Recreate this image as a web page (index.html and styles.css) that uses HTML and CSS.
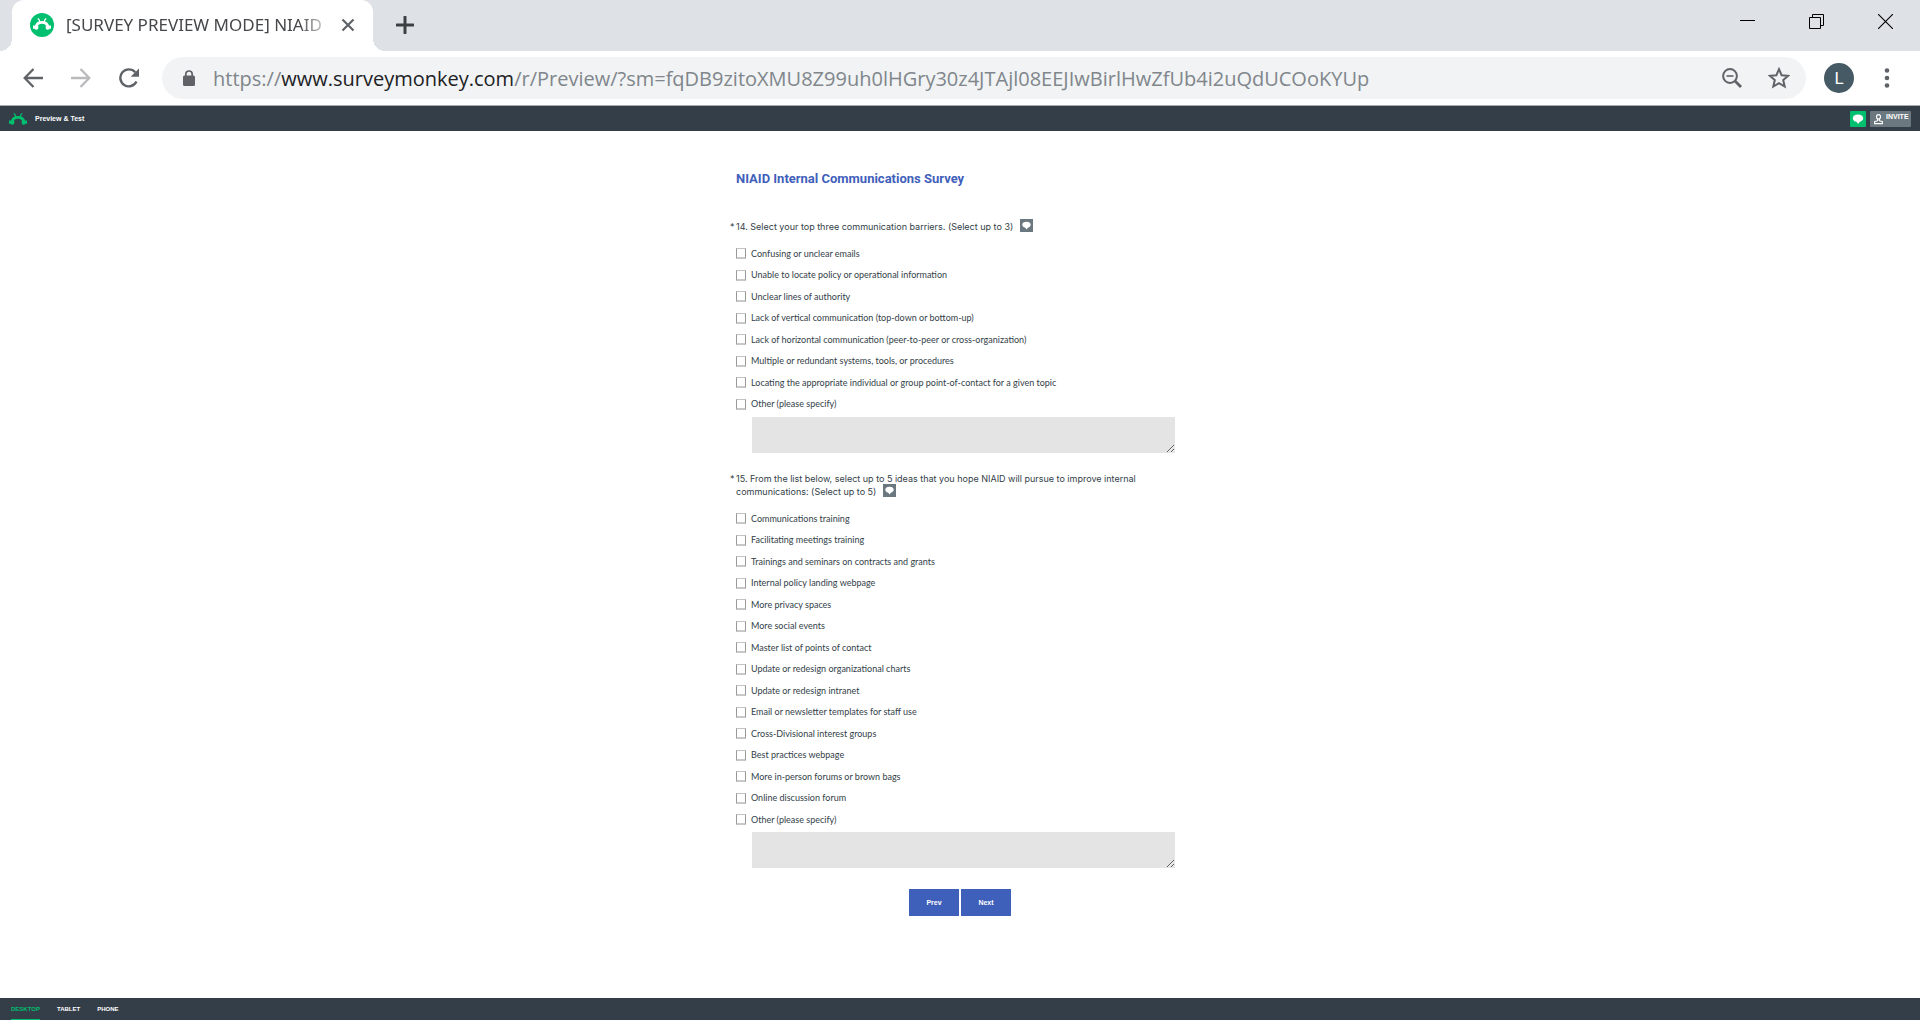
FILE: index.html
```
<!DOCTYPE html>
<html lang="en">
<head>
<meta charset="utf-8">
<title>[SURVEY PREVIEW MODE] NIAID Internal Communications Survey</title>
<link rel="stylesheet" href="styles.css">
</head>
<body>
<svg class="defs" aria-hidden="true">
  <symbol id="monkey" viewBox="0 0 18 12">
    <path d="M3.200 8.600C3.800 5.500 6 4.400 9 4.400s5.200 1.100 5.800 4.200" fill="none" stroke="currentColor" stroke-width="2.900"/>
    <path d="M6.700 3.600C6.500 2 6 1.200 5.200.800M11.300 3.600c.2-1.600.7-2.400 1.500-2.800" fill="none" stroke="currentColor" stroke-width="1.300" stroke-linecap="round"/>
    <path d="M1.200 7.400a1.700 1.700 0 1 0 .4 3.300 2 2 0 0 0 3.700-.5V8zM16.800 7.400a1.700 1.700 0 1 1-.4 3.300 2 2 0 0 1-3.700-.5V8z" fill="currentColor"/>
  </symbol>
  <symbol id="bubble" viewBox="0 0 13 13">
    <path d="M6.500 2.800C3.900 2.800 2.300 4 2.300 5.800c0 1.600 1.300 2.600 3 2.900L6.600 10.600 7.900 8.700c1.600-.4 2.800-1.400 2.800-2.900 0-1.800-1.600-3-4.200-3z" fill="#fff"/>
  </symbol>
</svg>

<header class="browser">
  <div class="tab-strip">
    <div class="tab">
      <svg class="favicon" viewBox="0 0 24 24" aria-hidden="true"><circle cx="12" cy="12" r="12" fill="#00bf6f"/><use href="#monkey" x="3" y="5" width="18" height="12" color="#fff"/></svg>
      <span class="tab-title">[SURVEY PREVIEW MODE] NIAID</span>
      <button class="icon-button tab-close" aria-label="Close tab"><svg width="14" height="14" viewBox="0 0 14 14"><path d="M1.500 1.500l11 11M12.500 1.500l-11 11" stroke="#5f6368" stroke-width="2.200"/></svg></button>
    </div>
    <button class="icon-button new-tab" aria-label="New tab"><svg width="18" height="18" viewBox="0 0 18 18"><path d="M9 1v16M1 9h16" stroke="#3c4043" stroke-width="3" stroke-linecap="round"/></svg></button>
    <div class="window-controls">
      <button class="icon-button window-button" aria-label="Minimize"><svg width="15" height="15" viewBox="0 0 15 15"><path d="M0 6.500h15" stroke="#000"/></svg></button>
      <button class="icon-button window-button" aria-label="Restore"><svg width="15" height="15" viewBox="0 0 15 15"><path d="M.5 3.500h11v11H.5zM3.500 3.500v-3h11v11h-3" fill="none" stroke="#000"/></svg></button>
      <button class="icon-button window-button" aria-label="Close"><svg width="15" height="15" viewBox="0 0 15 15"><path d="M0 0l15 15M15 0L0 15" stroke="#000" stroke-width="1.100"/></svg></button>
    </div>
  </div>
  <div class="toolbar">
    <button class="icon-button nav-button" aria-label="Back"><svg width="20" height="20" viewBox="0 0 20 20"><path d="M20 10H2M10.500 1L1.700 10l8.800 9" fill="none" stroke="#5f6368" stroke-width="2.300"/></svg></button>
    <button class="icon-button nav-button" aria-label="Forward"><svg width="20" height="20" viewBox="0 0 20 20"><path d="M0 10h18M9.500 1l8.800 9-8.800 9" fill="none" stroke="#bababd" stroke-width="2.300"/></svg></button>
    <button class="icon-button nav-button" aria-label="Reload"><svg width="22" height="20" viewBox="0 0 22 20"><path d="M18.500 13.500A8.500 8.500 0 1 1 17.200 4.200" fill="none" stroke="#5f6368" stroke-width="2.400"/><path d="M21 .5v8.300h-8.300z" fill="#5f6368"/></svg></button>
    <div class="omnibox">
      <svg class="lock" width="12" height="16" viewBox="0 0 12 16" aria-hidden="true"><path d="M2.800 7V4.200a3.200 3.200 0 0 1 6.400 0V7" fill="none" stroke="#5f6368" stroke-width="1.700"/><rect y="5.500" width="12" height="10.500" rx="1.500" fill="#5f6368"/></svg>
      <div class="url" role="textbox" contenteditable="true" spellcheck="false" aria-label="Address">https://<span class="url-host">www.surveymonkey.com</span>/r/Preview/?sm=fqDB9zitoXMU8Z99uh0lHGry30z4JTAjl08EEJIwBirlHwZfUb4i2uQdUCOoKYUp</div>
      <button class="icon-button" aria-label="Zoom out"><svg width="20" height="20" viewBox="0 0 20 20"><circle cx="8" cy="8" r="6.900" fill="none" stroke="#5f6368" stroke-width="2"/><path d="M4.500 8h7" stroke="#5f6368" stroke-width="1.600"/><path d="M12.800 12.800l6.200 6.200" stroke="#5f6368" stroke-width="2.800"/></svg></button>
      <button class="icon-button" aria-label="Bookmark this page"><svg width="22" height="22" viewBox="0 0 22 22"><path d="M11 2.200l2.600 6 6.500.6-4.900 4.300 1.500 6.400L11 16.100l-5.700 3.400 1.500-6.400L1.900 8.800l6.500-.6z" fill="none" stroke="#5f6368" stroke-width="2"/></svg></button>
    </div>
    <button class="avatar" aria-label="Profile L">L</button>
    <button class="icon-button menu" aria-label="Menu"><svg width="6" height="20" viewBox="0 0 6 20"><g fill="#5f6368"><circle cx="3" cy="2.500" r="2.300"/><circle cx="3" cy="10" r="2.300"/><circle cx="3" cy="17.500" r="2.300"/></g></svg></button>
  </div>
</header>

<div class="preview-bar">
  <svg class="brand" width="18" height="12" aria-hidden="true"><use href="#monkey"/></svg>
  <span class="preview-title">Preview &amp; Test</span>
  <button class="comment-button" aria-label="Comments"><svg width="16" height="16"><use href="#bubble"/></svg></button>
  <button class="invite-button"><svg width="11" height="12" viewBox="0 0 11 12" aria-hidden="true"><path d="M5.500 1.600c-1.500 0-2 1-2 2.100s.7 2.300 2 2.300 2-1.200 2-2.300-.5-2.100-2-2.100zM4.600 6v1.700L1.600 8.600v2h7.800v-2l-3-.9V6" fill="none" stroke="#fff" stroke-width="1.100"/></svg><span>INVITE</span></button>
</div>

<main class="page">
  <form class="survey">
    <h1>NIAID Internal Communications Survey</h1>

    <fieldset class="question">
      <legend><span class="required">*</span>14. Select your top three communication barriers. (Select up to 3) <button type="button" class="note" aria-label="Comment on question 14"><svg width="13" height="13"><use href="#bubble"/></svg></button></legend>
      <div class="options">
        <label><input type="checkbox" name="q14">Confusing or unclear emails</label>
        <label><input type="checkbox" name="q14">Unable to locate policy or operational information</label>
        <label><input type="checkbox" name="q14">Unclear lines of authority</label>
        <label><input type="checkbox" name="q14">Lack of vertical communication (top-down or bottom-up)</label>
        <label><input type="checkbox" name="q14">Lack of horizontal communication (peer-to-peer or cross-organization)</label>
        <label><input type="checkbox" name="q14">Multiple or redundant systems, tools, or procedures</label>
        <label><input type="checkbox" name="q14">Locating the appropriate individual or group point-of-contact for a given topic</label>
        <label><input type="checkbox" name="q14">Other (please specify)</label>
      </div>
      <textarea aria-label="Other communication barrier"></textarea>
    </fieldset>

    <fieldset class="question">
      <legend><span class="required">*</span>15. From the list below, select up to 5 ideas that you hope NIAID will pursue to improve internal communications: (Select up to 5) <button type="button" class="note" aria-label="Comment on question 15"><svg width="13" height="13"><use href="#bubble"/></svg></button></legend>
      <div class="options">
        <label><input type="checkbox" name="q15">Communications training</label>
        <label><input type="checkbox" name="q15">Facilitating meetings training</label>
        <label><input type="checkbox" name="q15">Trainings and seminars on contracts and grants</label>
        <label><input type="checkbox" name="q15">Internal policy landing webpage</label>
        <label><input type="checkbox" name="q15">More privacy spaces</label>
        <label><input type="checkbox" name="q15">More social events</label>
        <label><input type="checkbox" name="q15">Master list of points of contact</label>
        <label><input type="checkbox" name="q15">Update or redesign organizational charts</label>
        <label><input type="checkbox" name="q15">Update or redesign intranet</label>
        <label><input type="checkbox" name="q15">Email or newsletter templates for staff use</label>
        <label><input type="checkbox" name="q15">Cross-Divisional interest groups</label>
        <label><input type="checkbox" name="q15">Best practices webpage</label>
        <label><input type="checkbox" name="q15">More in-person forums or brown bags</label>
        <label><input type="checkbox" name="q15">Online discussion forum</label>
        <label><input type="checkbox" name="q15">Other (please specify)</label>
      </div>
      <textarea aria-label="Other idea"></textarea>
    </fieldset>

    <div class="pager">
      <button type="button">Prev</button>
      <button type="button">Next</button>
    </div>
  </form>
</main>

<nav class="device-bar" aria-label="Preview device">
  <a class="active" href="#desktop">DESKTOP</a>
  <a href="#tablet">TABLET</a>
  <a href="#phone">PHONE</a>
</nav>
</body>
</html>
```
FILE: styles.css
```
* {
  box-sizing: border-box;
}

body {
  margin: 0;
  min-height: 100vh;
  display: flex;
  flex-direction: column;
  background: #fff;
  font-family: Roboto, "Liberation Sans", sans-serif;
  color: #333e48;
}

button {
  font: inherit;
  border: 0;
  padding: 0;
  cursor: pointer;
}

svg {
  display: block;
  flex: none;
}

.defs {
  position: absolute;
  width: 0;
  height: 0;
}

.icon-button {
  display: flex;
  align-items: center;
  justify-content: center;
  background: none;
}

/* Browser frame */

.tab-strip {
  display: flex;
  height: 51px;
  padding-left: 12px;
  background: #dee1e6;
}

.tab {
  position: relative;
  display: flex;
  align-items: center;
  width: 361px;
  padding: 0 17px 2px 18px;
  background: #fff;
  border-radius: 12px 12px 0 0;
}

.tab::before,
.tab::after {
  content: "";
  position: absolute;
  bottom: 0;
  width: 12px;
  height: 12px;
}

.tab::before {
  left: -12px;
  background: radial-gradient(circle at 0 0, #dee1e6 12px, #fff 12px);
}

.tab::after {
  right: -12px;
  background: radial-gradient(circle at 100% 0, #dee1e6 12px, #fff 12px);
}

.favicon {
  width: 24px;
  height: 24px;
}

.tab-title {
  flex: 1;
  margin-left: 12px;
  overflow: hidden;
  white-space: nowrap;
  font: 17px/24px "Noto Sans", sans-serif;
  color: #45474a;
  -webkit-mask-image: linear-gradient(to left, transparent 8px, #000 40px);
  mask-image: linear-gradient(to left, transparent 8px, #000 40px);
}

.tab-close {
  width: 16px;
}

.new-tab {
  width: 40px;
  height: 49px;
  margin-left: 12px;
}

.window-controls {
  display: flex;
  margin-left: auto;
  height: 43px;
}

.window-button {
  width: 69px;
}

.toolbar {
  display: flex;
  align-items: center;
  height: 55px;
  padding: 0 21px 0 9px;
  border-bottom: 1px solid #a9acaf;
}

.nav-button {
  width: 48px;
  height: 42px;
}

.omnibox {
  flex: 1;
  min-width: 0;
  display: flex;
  align-items: center;
  gap: 26px;
  height: 42px;
  margin-left: 9px;
  padding: 0 16px 0 21px;
  border-radius: 21px;
  background: #f1f3f4;
}

.url {
  flex: 1;
  min-width: 0;
  margin-left: -8px;
  padding-top: 2px;
  overflow: hidden;
  white-space: nowrap;
  font: 20px/28px "Open Sans", sans-serif;
  color: #80868b;
  outline: 0;
}

.url-host {
  color: #202124;
}

.avatar {
  width: 30px;
  height: 30px;
  margin-left: 18px;
  border-radius: 50%;
  background: #455a64;
  color: #fff;
  font-size: 17px;
  line-height: 30px;
}

.menu {
  width: 24px;
  height: 42px;
  margin-left: 21px;
}

/* Survey preview header */

.preview-bar {
  display: flex;
  align-items: center;
  height: 25px;
  padding: 0 9px;
  background: #333e48;
  color: #fff;
  font-family: "Liberation Sans", sans-serif;
  font-weight: bold;
}

.brand {
  color: #00bf6f;
}

.preview-title {
  margin-left: 8px;
  font-size: 7px;
  line-height: 10px;
}

.comment-button {
  margin-left: auto;
  height: 16px;
  border-radius: 1px;
  background: #00bf6f;
}

.invite-button {
  display: flex;
  align-items: center;
  gap: 2px;
  width: 41px;
  height: 16px;
  margin-left: 4px;
  padding: 0 3px;
  border-radius: 1px;
  background: #6b787f;
  color: #fff;
  font-size: 7px;
  line-height: 7px;
}

.invite-button span {
  padding-bottom: 5px;
}

/* Survey */

.page {
  flex: 1;
  padding: 39px 16px;
}

.survey {
  max-width: 448px;
  margin: 0 auto;
}

h1 {
  margin: 0 0 32px;
  font-size: 13px;
  line-height: 18px;
  font-weight: bold;
  color: #3f60ba;
}

.question {
  min-width: 0;
  margin: 0 9px 19px 0;
  padding: 0;
  border: 0;
}

.question legend {
  position: relative;
  width: 100%;
  margin-bottom: 10px;
  padding: 0;
  font: 9px/13px Inter, sans-serif;
}

.required {
  position: absolute;
  left: -6px;
}

.note {
  display: inline-block;
  width: 13px;
  height: 13px;
  margin: -4px 0 0 4px;
  vertical-align: middle;
  background: #6b787f;
}

.options {
  display: grid;
  grid-auto-rows: 21px 22px;
  font: 9px/12px Lato, sans-serif;
}

.options label {
  display: flex;
  align-items: center;
  gap: 5px;
}

.options input {
  appearance: none;
  width: 10px;
  height: 11px;
  margin: 0;
  border: 1px solid #999;
  border-top-color: #c4c4c4;
  border-bottom: 2px solid #c8c8c8;
  background: #fff;
}

textarea {
  display: block;
  width: calc(100% - 16px);
  height: 36px;
  margin: 2px 0 0 16px;
  padding: 4px;
  border: 0;
  background: #e4e4e4;
  font: inherit;
  font-size: 9px;
}

.pager {
  display: flex;
  justify-content: center;
  gap: 2px;
  padding-top: 2px;
}

.pager button {
  width: 50px;
  height: 27px;
  background: #3f60ba;
  color: #fff;
  font: bold 7px/10px "Liberation Sans", sans-serif;
}

/* Device switcher */

.device-bar {
  display: flex;
  gap: 17px;
  height: 22px;
  padding-left: 11px;
  background: #333e48;
  font: bold 6px/22px "Liberation Sans", sans-serif;
}

.device-bar a {
  color: #fff;
  text-decoration: none;
}

.device-bar .active {
  color: #00bf6f;
  border-bottom: 1px solid #00bf6f;
}
```
